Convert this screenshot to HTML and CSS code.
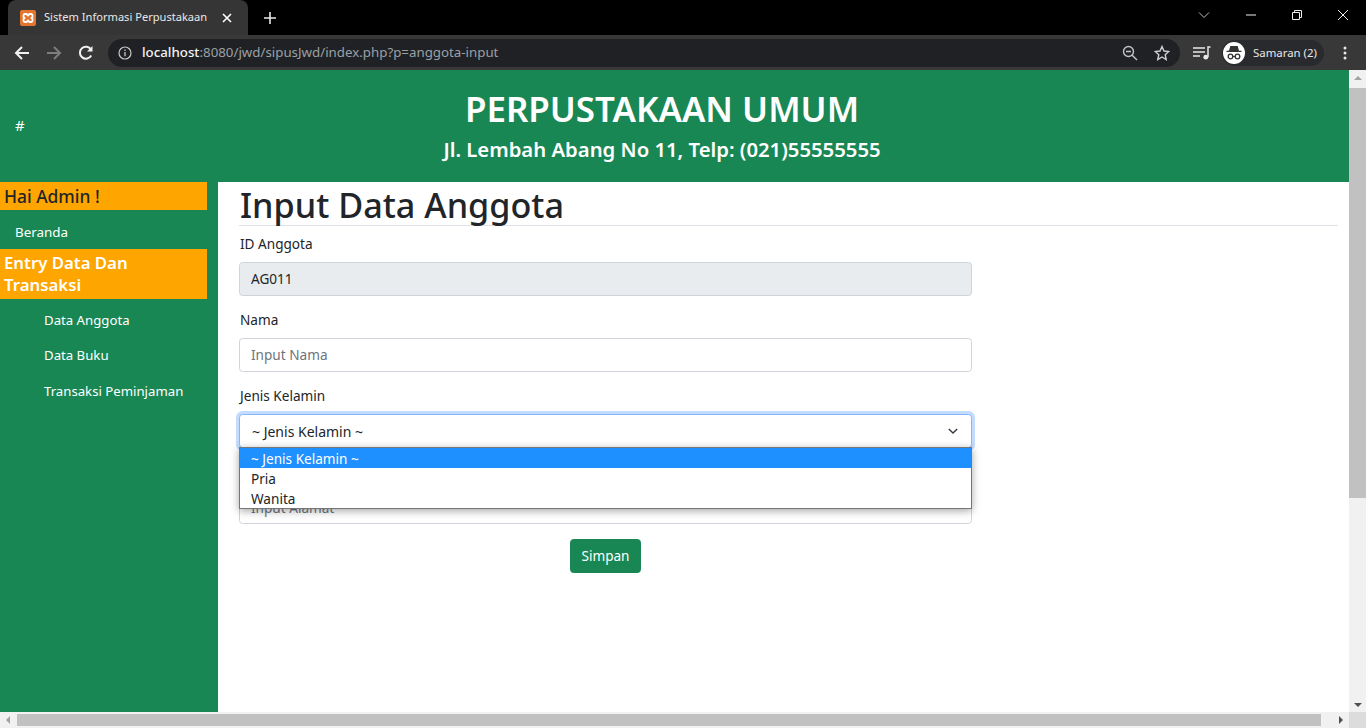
FILE: index.html
```html
<!DOCTYPE html>
<html lang="en">
<head>
    <meta charset="UTF-8">
    <meta name="viewport" content="width=device-width, initial-scale=1.0">
    <title>Sistem Informasi Perpustakaan</title>
    <link rel="stylesheet" href="styles.css">
</head>
<body>
<div class="browser">
    <div class="tabstrip">
        <div class="tab">
            <svg class="favicon" viewBox="0 0 16 16" width="16" height="16">
                <rect width="16" height="16" rx="2" fill="#e4752f"/>
                <path d="M5 4h1.500L8 5.500 9.500 4H11a1.500 1.500 0 0 1 1.500 1.500V7L11.500 8l1 1v1.500A1.500 1.500 0 0 1 11 12H9.500L8 10.500 6.500 12H5a1.500 1.500 0 0 1-1.500-1.500V9l1-1-1-1V5.500A1.500 1.500 0 0 1 5 4z" fill="none" stroke="#fff" stroke-width="1.800"/>
            </svg>
            <span class="tab-title">Sistem Informasi Perpustakaan</span>
            <svg class="tab-close" viewBox="0 0 10 10" width="10" height="10"><path d="M1 1l8 8M9 1l-8 8" stroke="#fff" stroke-width="1.600"/></svg>
        </div>
        <svg class="tab-new" viewBox="0 0 12 12" width="12" height="12"><path d="M6 0v12M0 6h12" stroke="#e8e8e8" stroke-width="1.600"/></svg>
        <div class="win-controls">
            <svg viewBox="0 0 12 8" width="12" height="8"><path d="M1 1.500l5 5 5-5" fill="none" stroke="#bbb" stroke-width="1"/></svg>
            <svg viewBox="0 0 10 2" width="10" height="2"><path d="M0 1h10" stroke="#eee" stroke-width="1"/></svg>
            <svg viewBox="0 0 10 10" width="10" height="10"><path d="M.5 2.500h7v7h-7zM2.500 2.500v-2h7v7h-2" fill="none" stroke="#eee" stroke-width="1"/></svg>
            <svg viewBox="0 0 10 10" width="10" height="10"><path d="M0 0l10 10M10 0L0 10" stroke="#eee" stroke-width="1"/></svg>
        </div>
    </div>
    <div class="toolbar">
        <svg class="tool tool-first" viewBox="0 0 16 16" width="16" height="16"><path d="M15 8H2M8 2L2 8l6 6" fill="none" stroke="#f1f1f1" stroke-width="2"/></svg>
        <svg class="tool" viewBox="0 0 16 16" width="16" height="16"><path d="M1 8h13M8 2l6 6-6 6" fill="none" stroke="#7d7d7d" stroke-width="2"/></svg>
        <svg class="tool" viewBox="0 0 16 16" width="16" height="16"><path d="M13.200 10.500A6 6 0 1 1 13 4.500" fill="none" stroke="#f1f1f1" stroke-width="2"/><path d="M14.500 1v5.500H9z" fill="#f1f1f1"/></svg>
        <div class="omnibox">
            <svg viewBox="0 0 14 14" width="14" height="14"><circle cx="7" cy="7" r="6" fill="none" stroke="#c8c8c8" stroke-width="1.200"/><path d="M7 6v4.200M7 3.500v1.400" stroke="#c8c8c8" stroke-width="1.300"/></svg>
            <span class="url"><b>localhost</b>:8080/jwd/sipusJwd/index.php?p=anggota-input</span>
            <svg class="omni-zoom" viewBox="0 0 16 16" width="16" height="16"><circle cx="6.500" cy="6.500" r="5" fill="none" stroke="#c4c4c4" stroke-width="1.400"/><path d="M10.200 10.200L15 15M4 6.500h5" stroke="#c4c4c4" stroke-width="1.400"/></svg>
            <svg class="omni-star" viewBox="0 0 16 16" width="16" height="16"><path d="M8 1.500l2 4.500 4.800.5-3.600 3.200 1 4.800L8 12l-4.200 2.500 1-4.800L1.200 6.500 6 6z" fill="none" stroke="#d0d0d0" stroke-width="1.400"/></svg>
        </div>
        <svg class="media" viewBox="0 0 18 14" width="18" height="14"><path d="M0 2h12M0 6h12M0 10h7" stroke="#e8e8e8" stroke-width="1.500"/><path d="M15 11V1h2.500" fill="none" stroke="#e8e8e8" stroke-width="1.500"/><circle cx="12.800" cy="11.200" r="2.400" fill="#e8e8e8"/></svg>
        <div class="profile">
            <span class="avatar">
                <svg viewBox="0 0 22 22" width="22" height="22"><path d="M7.300 4h7.400l1.300 4.700h2.500v1.300H3.500V8.700H6z" fill="#333"/><circle cx="7.500" cy="14.500" r="2.300" fill="none" stroke="#333" stroke-width="1.300"/><circle cx="14.500" cy="14.500" r="2.300" fill="none" stroke="#333" stroke-width="1.300"/><path d="M9.800 14.500h2.400" stroke="#333" stroke-width="1.200"/></svg>
            </span>
            <span class="profile-name">Samaran (2)</span>
        </div>
        <svg class="kebab" viewBox="0 0 4 14" width="4" height="14"><circle cx="2" cy="2" r="1.500" fill="#e8e8e8"/><circle cx="2" cy="7" r="1.500" fill="#e8e8e8"/><circle cx="2" cy="12" r="1.500" fill="#e8e8e8"/></svg>
    </div>
    <div class="viewport">
        <div class="page">
            <header class="site-header">
                <a class="brand" href="#">#</a>
                <div class="site-title">
                    <h1>PERPUSTAKAAN UMUM</h1>
                    <h3>Jl. Lembah Abang No 11, Telp: (021)55555555</h3>
                </div>
            </header>
            <div class="page-body">
                <nav class="sidebar">
                    <h5 class="side-head">Hai Admin !</h5>
                    <a class="side-link" href="#">Beranda</a>
                    <h5 class="side-head side-head-light">Entry Data Dan Transaksi</h5>
                    <a class="side-link side-sub" href="#">Data Anggota</a>
                    <a class="side-link side-sub" href="#">Data Buku</a>
                    <a class="side-link side-sub" href="#">Transaksi Peminjaman</a>
                </nav>
                <main class="content">
                    <h2 class="page-title">Input Data Anggota</h2>
                    <form class="form">
                        <div class="form-group">
                            <label>ID Anggota</label>
                            <input class="form-control" type="text" value="AG011" disabled>
                        </div>
                        <div class="form-group">
                            <label>Nama</label>
                            <input class="form-control" type="text" placeholder="Input Nama">
                        </div>
                        <div class="form-group select-group">
                            <label>Jenis Kelamin</label>
                            <div class="form-select">
                                <span>~ Jenis Kelamin ~</span>
                                <svg viewBox="0 0 16 16" width="16" height="16"><path d="M2 5l6 6 6-6" fill="none" stroke="#343a40" stroke-width="2" transform="translate(2.400 2.400) scale(.7)"/></svg>
                            </div>
                            <ul class="select-menu">
                                <li class="selected">~ Jenis Kelamin ~</li>
                                <li>Pria</li>
                                <li>Wanita</li>
                            </ul>
                        </div>
                        <div class="form-group">
                            <label class="label-covered">Alamat</label>
                            <input class="form-control" type="text" placeholder="Input Alamat">
                        </div>
                        <div class="form-actions">
                            <button class="btn" type="button">Simpan</button>
                        </div>
                    </form>
                </main>
            </div>
        </div>
        <div class="vscroll">
            <span class="arrow arrow-up"></span>
            <div class="vtrack"><div class="vthumb"></div></div>
            <span class="arrow arrow-down"></span>
        </div>
    </div>
    <div class="hscroll">
        <span class="arrow arrow-left"></span>
        <div class="htrack"><div class="hthumb"></div></div>
        <span class="arrow arrow-right"></span>
        <div class="corner"></div>
    </div>
</div>
</body>
</html>
```

FILE: styles.css
```css
* {
    box-sizing: border-box;
}
html, body {
    height: 100%;
    margin: 0;
    overflow: hidden;
}
body {
    font-family: 'Noto Sans', 'Open Sans', sans-serif;
    font-size: 13.6px;
    line-height: 1.5;
    color: #212529;
}
a {
    text-decoration: none;
}
.browser {
    display: flex;
    flex-direction: column;
    height: 728px;
}

/* browser chrome */
.tabstrip {
    height: 35px;
    flex: none;
    background: #000;
    display: flex;
    align-items: flex-end;
    padding-left: 8px;
}
.tab {
    width: 240px;
    height: 35px;
    background: #353535;
    border-radius: 8px 8px 0 0;
    display: flex;
    align-items: center;
    padding: 0 16px 0 12px;
    color: #e8e8e8;
    font-size: 11.1px;
}
.favicon {
    flex: none;
}
.tab-title {
    margin-left: 8px;
    flex: 1;
    white-space: nowrap;
}
.tab-new {
    margin: 0 0 11px 16px;
}
.win-controls {
    margin-left: auto;
    display: flex;
    align-items: center;
    height: 30px;
    align-self: flex-start;
}
.win-controls svg {
    margin-right: 36px;
}
.win-controls svg:last-child {
    margin-right: 18px;
}
.toolbar {
    height: 35px;
    flex: none;
    background: #383838;
    display: flex;
    align-items: center;
    padding-right: 19px;
}
.tool {
    margin-left: 16px;
}
.tool-first {
    margin-left: 14px;
}
.omnibox {
    margin-left: 14px;
    width: 1072px;
    height: 28px;
    border-radius: 14px;
    background: #202124;
    display: flex;
    align-items: center;
    padding: 0 10px;
}
.url {
    margin-left: 10px;
    font-size: 13.3px;
    color: #9aa0a6;
    flex: 1;
    white-space: nowrap;
}
.url b {
    color: #f1f3f4;
    font-weight: 500;
}
.omni-star {
    margin-left: 16px;
}
.media {
    margin-left: 13px;
    flex: none;
}
.profile {
    margin-left: 11px;
    width: 102px;
    height: 26px;
    flex: none;
    border-radius: 13px;
    background: #292a2d;
    display: flex;
    align-items: center;
}
.avatar {
    width: 22px;
    height: 22px;
    border-radius: 50%;
    background: #fff;
    flex: none;
    margin-left: 1px;
}
.avatar svg {
    display: block;
}
.profile-name {
    margin-left: 8px;
    font-size: 11.4px;
    color: #e8e8e8;
    white-space: nowrap;
}
.kebab {
    margin-left: auto;
    flex: none;
}

/* page viewport */
.viewport {
    flex: 1;
    display: flex;
    min-height: 0;
}
.page {
    flex: 1;
    min-width: 0;
    display: flex;
    flex-direction: column;
    background: #fff;
}
.site-header {
    height: 112px;
    flex: none;
    background: #198754;
    display: flex;
    align-items: center;
    color: #fff;
}
.brand {
    width: 0;
    margin: 0 0 2px 15px;
    color: #fff;
    font-size: 15px;
}
.site-title {
    flex: 1;
    text-align: center;
    padding: 0 40px 3px 0;
}
.site-title h1 {
    margin: 0 0 7px;
    font-size: 34.9px;
    font-weight: 600;
    line-height: 1.2;
}
.site-title h3 {
    margin: 0;
    font-size: 20.3px;
    font-weight: 600;
    line-height: 1.2;
}
.page-body {
    flex: 1;
    display: flex;
    min-height: 0;
}
.sidebar {
    width: 218px;
    flex: none;
    background: #198754;
    padding-right: 11px;
}
.side-head {
    margin: 0;
    padding: 3px 4px;
    background: #ffa500;
    font-size: 17.4px;
    font-weight: 500;
    line-height: 22px;
    color: #212529;
}
.side-head-light {
    color: #fff;
    font-size: 16.8px;
    font-weight: 600;
    padding-right: 30px;
}
.side-link {
    display: block;
    color: #fff;
    padding: 11px 15px 0;
    height: 39px;
    line-height: 22px;
    font-size: 13.4px;
}
.side-sub {
    padding: 6px 0 0 44px;
    height: 36px;
    white-space: nowrap;
    font-size: 13.2px;
}
.side-head-light + .side-sub {
    padding-top: 10px;
    height: 39px;
}
.content {
    flex: 1;
    min-width: 0;
    padding: 0 11px 0 21px;
}
.page-title {
    margin: 0 0 7px;
    padding: 2px 0 0 1px;
    font-size: 34.2px;
    font-weight: 500;
    line-height: 41px;
    border-bottom: 1px solid #dee2e6;
}
.form {
    width: 733px;
}
.form-group {
    margin-bottom: 13.300px;
    position: relative;
}
.form-group label {
    display: block;
    height: 21.600px;
    margin-bottom: 7.200px;
    line-height: 22.600px;
    padding-left: 1px;
}
.form-group .label-covered {
    visibility: hidden;
}
.form-control {
    display: block;
    width: 100%;
    height: 34px;
    padding: 0 11px;
    font: inherit;
    color: #212529;
    background: #fff;
    border: 1px solid #ced4da;
    border-radius: 3.600px;
}
.form-control::placeholder {
    color: #6c757d;
}
.form-control:disabled {
    background: #e9ecef;
}
.form-select {
    height: 34px;
    padding: 2px 10px 0 12px;
    display: flex;
    align-items: center;
    justify-content: space-between;
    border: 1px solid #86b7fe;
    border-radius: 3.600px;
    box-shadow: 0 0 0 3px rgba(13, 110, 253, .25);
    background: #fff;
    font-size: 14px;
}
.form-select svg {
    margin-top: -2px;
}
.select-menu {
    position: absolute;
    left: 0;
    right: 0;
    top: 62px;
    margin: 0;
    padding: 0;
    list-style: none;
    background: #fff;
    border: 1px solid #767676;
    box-shadow: 0 2px 8px rgba(0, 0, 0, .35);
    z-index: 2;
    font-size: 13.6px;
}
.select-menu li {
    height: 20px;
    line-height: 22px;
    padding-left: 11px;
}
.select-menu .selected {
    background: #1e90ff;
    color: #fff;
}
.form-actions {
    text-align: center;
    margin-top: 15px;
}
.btn {
    width: 71px;
    height: 34px;
    padding: 0;
    font: inherit;
    color: #fff;
    background: #198754;
    border: 1px solid #198754;
    border-radius: 3.600px;
}

/* scrollbars */
.vscroll {
    width: 17px;
    flex: none;
    background: #f1f1f1;
    display: flex;
    flex-direction: column;
}
.vtrack {
    flex: 1;
}
.vthumb {
    height: 410px;
    background: #c1c1c1;
}
.arrow {
    flex: none;
    display: flex;
    width: 0;
    height: 0;
    border: 4px solid transparent;
}
.arrow-up {
    border-bottom: 4px solid #a3a3a3;
    border-top-width: 0;
    margin: 6px auto 8px;
}
.arrow-down {
    border-top: 4px solid #505050;
    border-bottom-width: 0;
    margin: 8px auto 5px;
}
.hscroll {
    height: 16px;
    flex: none;
    background: #f1f1f1;
    display: flex;
    align-items: center;
}
.htrack {
    flex: 1;
    height: 12px;
}
.hthumb {
    height: 12px;
    width: 1304px;
    background: #c1c1c1;
}
.arrow-left {
    border-right: 4px solid #a3a3a3;
    border-left-width: 0;
    margin: 0 7px 0 6px;
}
.arrow-right {
    border-left: 4px solid #505050;
    border-right-width: 0;
    margin: 0 6px 0 6px;
}
.corner {
    width: 17px;
    height: 16px;
    background: #dcdcdc;
}
```
